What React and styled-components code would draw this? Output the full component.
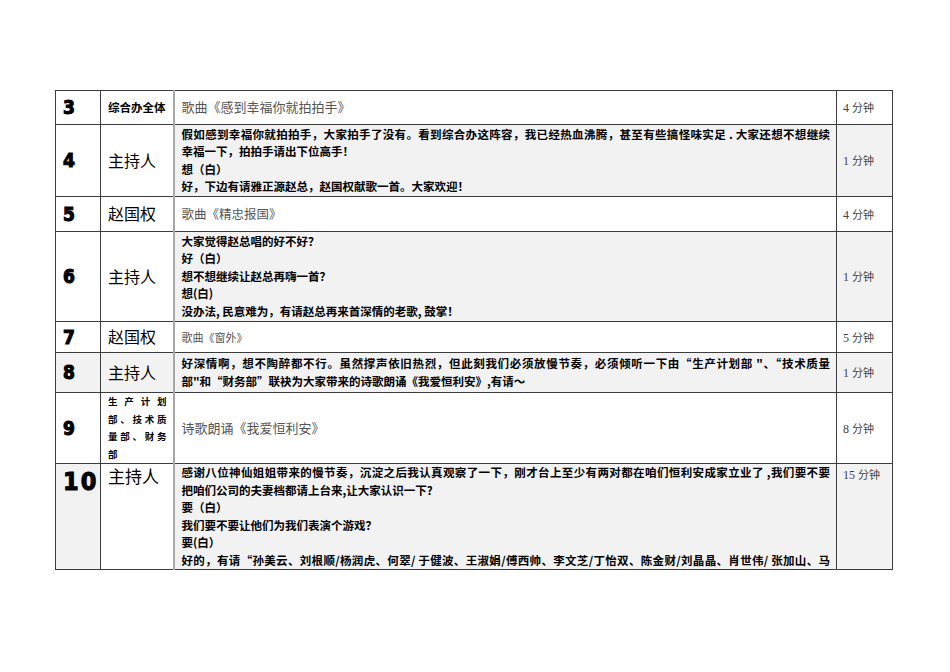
import React from 'react';
import styled, { createGlobalStyle } from "styled-components";

const GlobalStyle = createGlobalStyle`
  html, body {
    margin: 0;
    padding: 0;
    background: #ffffff;
  }
  body {
    font-family: "Noto Sans CJK SC", "Noto Sans", sans-serif;
  }
`

const Page = styled.div`
  width: 950px;
  height: 672px;
  padding: 90px 0 0 55px;
  box-sizing: border-box;
  background: #ffffff;
`

const Table = styled.table`
  width: 837px;
  border-collapse: collapse;
  table-layout: fixed;
`

const Row = styled.tr`
  height: ${p => p.$h}px;
`

const Cell = styled.td`
  border: 1px solid #3c3c3c;
  padding: 0;
  vertical-align: ${p => (p.$top ? "top" : "middle")};
  background: ${p => (p.$shade ? "#f2f2f2" : "#ffffff")};
`

const NumCell = styled(Cell)`
  padding-left: 7px;
  padding-top: ${p => (p.$top ? "5px" : "0")};
  font-family: "DejaVu Sans Condensed", "DejaVu Sans", sans-serif;
  font-weight: 700;
  font-size: ${p => p.$size || 19}px;
  line-height: 1;
  color: #000;
  -webkit-text-stroke: 1px #000;
  letter-spacing: ${p => (p.$size ? "2px" : "0")};
`

const WhoCell = styled(Cell)`
  padding: ${p => (p.$top ? "2px 6px 0 7px" : "0 6px 0 7px")};
  border-right: 2px solid #a8a8a8;
  color: #000;
  font-size: ${p => p.$size || 16}px;
  font-weight: ${p => (p.$bold ? 700 : 400)};
  line-height: 1.2;
  white-space: nowrap;
`

const DeptLine = styled.div`
  font-size: 9.5px;
  font-weight: 700;
  line-height: 17.5px;
  text-align: justify;
  text-align-last: ${p => (p.$end ? "left" : "justify")};
`

const TextCell = styled(Cell)`
  padding: 0 6px 0 7px;
  color: #000;
`

const Line = styled.div`
  font-size: 11.5px;
  font-weight: 700;
  line-height: 17.5px;
  white-space: ${p => (p.$full ? "normal" : "nowrap")};
  text-align: ${p => (p.$full ? "justify" : "left")};
  text-align-last: ${p => (p.$full ? "justify" : "auto")};
`

const Song = styled.div`
  font-size: ${p => p.$size || 13}px;
  color: #555555;
  font-weight: 400;
  line-height: 1.3;
`

const TimeCell = styled(Cell)`
  padding: ${p => (p.$top ? "2px 4px 0 6px" : "0 4px 0 6px")};
  font-family: "Liberation Serif", "Noto Sans CJK SC", serif;
  font-size: 12px;
  color: #444;
  white-space: nowrap;
`

const Unit = styled.span`
  font-family: "Noto Sans CJK SC", sans-serif;
  font-size: 11px;
  font-weight: 400;
`

function Time({ n, top, shade }) {
  return (
    <TimeCell $top={top} $shade={shade}>
      {n} <Unit>分钟</Unit>
    </TimeCell>
  );
}

function Lines({ items }) {
  return items.map((l, i) => (
    <Line key={i} $full={l.full}>{l.t}</Line>
  ));
}

const row4 = [
  { t: "假如感到幸福你就拍拍手，大家拍手了没有。看到综合办这阵容，我已经热血沸腾，甚至有些搞怪味实足 . 大家还想不想继续", full: true },
  { t: "幸福一下，拍拍手请出下位高手！" },
  { t: "想（白）" },
  { t: "好，下边有请雅正源赵总，赵国权献歌一首。大家欢迎！" },
];

const row6 = [
  { t: "大家觉得赵总唱的好不好？" },
  { t: "好（白）" },
  { t: "想不想继续让赵总再嗨一首？" },
  { t: "想(白)" },
  { t: "没办法, 民意难为，有请赵总再来首深情的老歌, 鼓掌！" },
];

const row8 = [
  { t: "好深情啊，想不陶醉都不行。虽然撑声依旧热烈，但此刻我们必须放慢节奏，必须倾听一下由“生产计划部 \"、“技术质量", full: true },
  { t: "部\"和“财务部”联袂为大家带来的诗歌朗诵《我爱恒利安》,有请～" },
];

const row10 = [
  { t: "感谢八位神仙姐姐带来的慢节奏，沉淀之后我认真观察了一下，刚才台上至少有两对都在咱们恒利安成家立业了 ,我们要不要", full: true },
  { t: "把咱们公司的夫妻档都请上台来,让大家认识一下?" },
  { t: "要（白）" },
  { t: "我们要不要让他们为我们表演个游戏？" },
  { t: "要(白）" },
  { t: "好的，有请“孙美云、刘根顺/杨润虎、何翠/ 于健波、王淑娟/傅西帅、李文芝/丁怡双、陈金财/刘晶晶、肖世伟/ 张加山、马", full: true },
];

export default function App() {
  return (
    <>
      <GlobalStyle />
      <Page>
        <Table>
          <colgroup>
            <col style={{ width: 45 }} />
            <col style={{ width: 73 }} />
            <col style={{ width: 663 }} />
            <col style={{ width: 56 }} />
          </colgroup>
          <tbody>
            <Row $h={34}>
              <NumCell>3</NumCell>
              <WhoCell $size={11.5} $bold>综合办全体</WhoCell>
              <TextCell><Song $size={13}>歌曲《感到幸福你就拍拍手》</Song></TextCell>
              <Time n="4" />
            </Row>
            <Row $h={72}>
              <NumCell>4</NumCell>
              <WhoCell>主持人</WhoCell>
              <TextCell $shade><Lines items={row4} /></TextCell>
              <Time n="1" shade />
            </Row>
            <Row $h={35}>
              <NumCell>5</NumCell>
              <WhoCell>赵国权</WhoCell>
              <TextCell><Song $size={12.5}>歌曲《精忠报国》</Song></TextCell>
              <Time n="4" />
            </Row>
            <Row $h={90}>
              <NumCell>6</NumCell>
              <WhoCell>主持人</WhoCell>
              <TextCell $shade><Lines items={row6} /></TextCell>
              <Time n="1" shade />
            </Row>
            <Row $h={31}>
              <NumCell>7</NumCell>
              <WhoCell>赵国权</WhoCell>
              <TextCell><Song $size={11}>歌曲《窗外》</Song></TextCell>
              <Time n="5" />
            </Row>
            <Row $h={40}>
              <NumCell $shade>8</NumCell>
              <WhoCell $shade>主持人</WhoCell>
              <TextCell $shade><Lines items={row8} /></TextCell>
              <Time n="1" shade />
            </Row>
            <Row $h={71}>
              <NumCell>9</NumCell>
              <WhoCell>
                <DeptLine>生产计划</DeptLine>
                <DeptLine>部、技术质</DeptLine>
                <DeptLine>量部、财务</DeptLine>
                <DeptLine $end>部</DeptLine>
              </WhoCell>
              <TextCell><Song $size={13}>诗歌朗诵《我爱恒利安》</Song></TextCell>
              <Time n="8" />
            </Row>
            <Row $h={106}>
              <NumCell $top $shade $size={25}>10</NumCell>
              <WhoCell $top $size={17}>主持人</WhoCell>
              <TextCell $top $shade><Lines items={row10} /></TextCell>
              <Time n="15" top shade />
            </Row>
          </tbody>
        </Table>
      </Page>
    </>
  );
}
